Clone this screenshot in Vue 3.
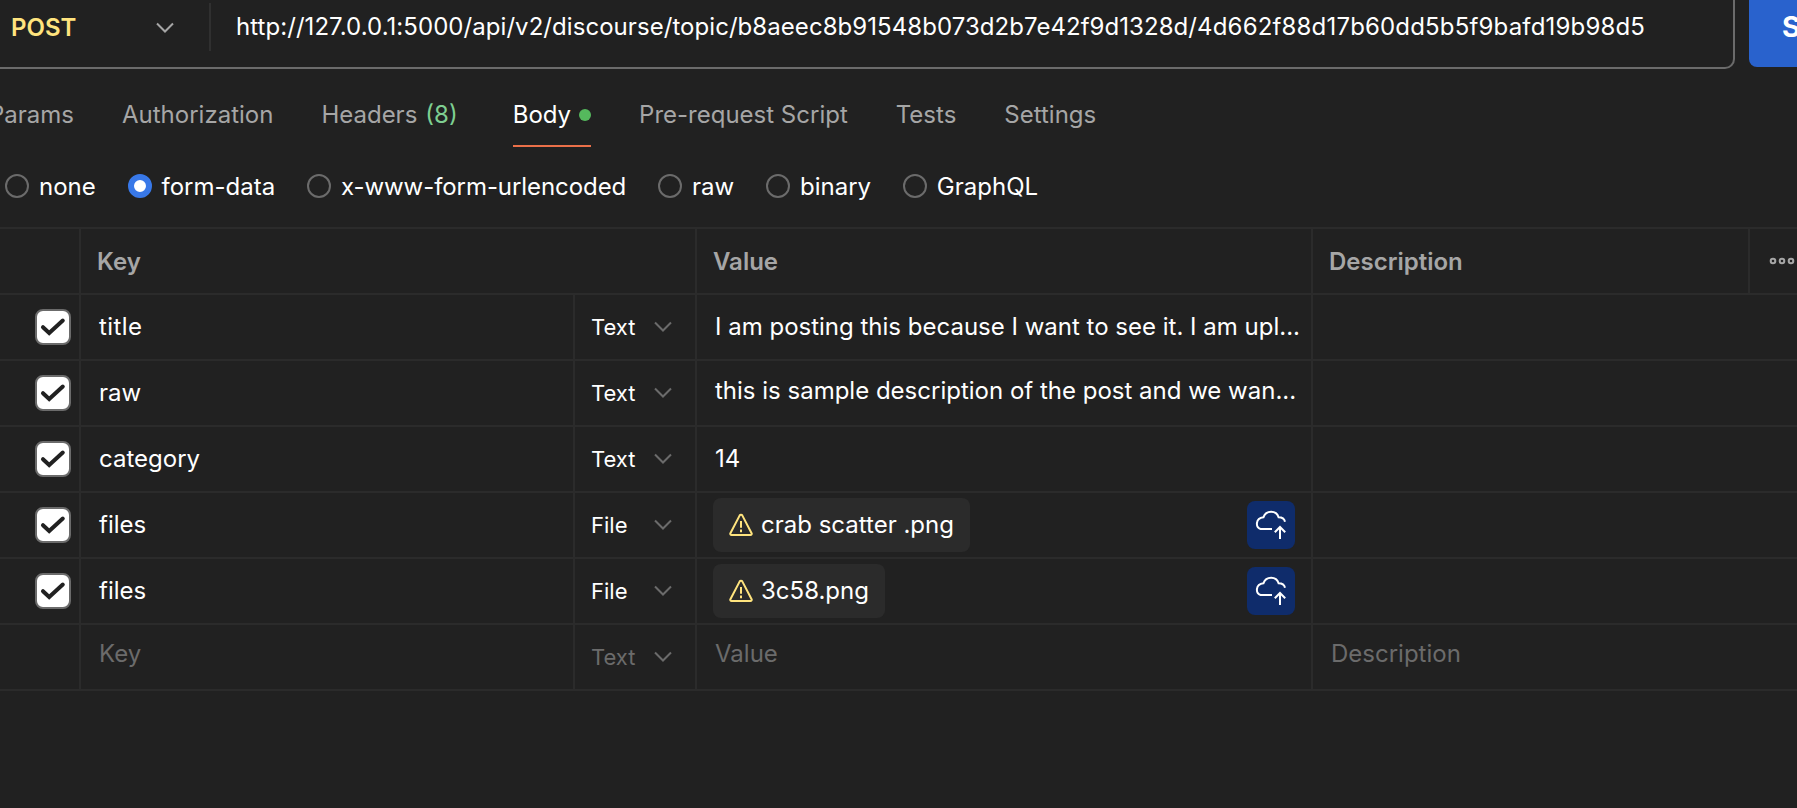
<script setup>
const urlPath = 'http://127.0.0.1:5000/api/v2/discourse/topic/b8aeec8b91548b073d2b7e42f9d1328d/'
const urlId = '4d662f88d17b60dd5b5f9bafd19b98d5'

const tabs = [
  { label: 'Params' },
  { label: 'Authorization' },
  { label: 'Headers', count: '(8)' },
  { label: 'Body', active: true },
  { label: 'Pre-request Script' },
  { label: 'Tests' },
  { label: 'Settings' },
]

const modes = ['none', 'form-data', 'x-www-form-urlencoded', 'raw', 'binary', 'GraphQL']
const mode = 'form-data'

const rows = [
  { key: 'title', type: 'Text', value: 'I am posting this because I want to see it. I am upl...' },
  { key: 'raw', type: 'Text', value: 'this is sample description of the post and we wan...', raised: true },
  { key: 'category', type: 'Text', value: '14' },
  { key: 'files', type: 'File', file: 'crab scatter .png' },
  { key: 'files', type: 'File', file: '3c58.png' },
]
</script>

<template>
  <div class="app">
    <div class="request">
      <div class="field">
        <div class="method">
          <span>POST</span>
          <svg class="chev" width="20" height="12" viewBox="0 0 20 12"><path d="M2 1.5 10 9.5 18 1.5" /></svg>
        </div>
        <div class="url">{{ urlPath }}<span class="url-id">{{ urlId }}</span></div>
      </div>
      <button class="send">Send</button>
    </div>

    <nav class="tabs">
      <div v-for="t in tabs" :key="t.label" class="tab" :class="{ active: t.active }">
        <span>{{ t.label }}</span>
        <span v-if="t.count" class="count">{{ t.count }}</span>
        <i v-if="t.active" class="dot"></i>
      </div>
    </nav>

    <div class="modes">
      <label v-for="m in modes" :key="m" class="mode" :class="{ long: m.length > 12 }">
        <i class="radio" :class="{ on: m === mode }"></i>
        <span>{{ m }}</span>
      </label>
    </div>

    <div class="table">
      <div class="row head">
        <div class="cell"></div>
        <div class="cell keyhead">Key</div>
        <div class="cell">Value</div>
        <div class="cell">Description</div>
        <div class="cell more">
          <svg width="26" height="8" viewBox="0 0 26 8">
            <circle cx="4" cy="4" r="2.3" /><circle cx="13" cy="4" r="2.3" /><circle cx="22" cy="4" r="2.3" />
          </svg>
        </div>
      </div>

      <div v-for="(r, i) in rows" :key="i" class="row">
        <div class="cell check">
          <span class="box">
            <svg width="32" height="32" viewBox="0 0 32 32"><path d="M6 16.200 12.200 22 25.800 9.500" /></svg>
          </span>
        </div>
        <div class="cell" :class="{ spaced: r.key === 'title' }">{{ r.key }}</div>
        <div class="cell type">
          <span>{{ r.type }}</span>
          <svg class="chev" width="20" height="12" viewBox="0 0 20 12"><path d="M2 1.5 10 9.5 18 1.5" /></svg>
        </div>
        <div v-if="r.file" class="cell file">
          <span class="chip">
            <svg class="warn" width="24" height="24" viewBox="0 0 24 24">
              <path d="M10.6 2.6a1.6 1.6 0 0 1 2.8 0l9.2 17.600a1.300 1.300 0 0 1-1.200 1.900H2.600a1.300 1.300 0 0 1-1.200-1.900z" />
              <path d="M12 8v6.700M12 16.500v2.800" />
            </svg>
            <span>{{ r.file }}</span>
          </span>
          <span class="upload">
            <svg width="48" height="48" viewBox="0 0 48 48">
              <path d="M25 28H13.600C8.400 26.400 8.200 17.200 16.400 16.300 19 8.800 29.400 8.800 31.600 16.300 35.200 16.300 37.400 18 38 20.700" />
              <path d="M33 38V26.200M27.800 31.200 33 26 38.200 31.200" />
            </svg>
          </span>
        </div>
        <div v-else class="cell" :class="{ raised: r.raised }"><span>{{ r.value }}</span></div>
        <div class="cell last"></div>
      </div>

      <div class="row blank">
        <div class="cell"></div>
        <div class="cell"><span>Key</span></div>
        <div class="cell type">
          <span>Text</span>
          <svg class="chev" width="20" height="12" viewBox="0 0 20 12"><path d="M2 1.5 10 9.5 18 1.5" /></svg>
        </div>
        <div class="cell"><span>Value</span></div>
        <div class="cell last"><span>Description</span></div>
      </div>
    </div>
  </div>
</template>

<style>
body {
  margin: 0;
  background: #212121;
  overflow: hidden;
}
</style>

<style scoped>
.app {
  width: 1797px;
  height: 808px;
  overflow: hidden;
  background: #212121;
  color: #fff;
  font: 24px/32px Inter, sans-serif;
  white-space: nowrap;
}
svg {
  display: block;
  fill: none;
  flex: none;
}
.chev {
  stroke: #6b6b6b;
  stroke-width: 2;
}
.request {
  display: flex;
  height: 69px;
}
.field {
  box-sizing: border-box;
  width: 1735px;
  flex: none;
  display: flex;
  padding-top: 3px;
  border: solid #6b6b6b;
  border-width: 0 2px 2px 0;
  border-radius: 0 0 10px 0;
}
.method {
  box-sizing: border-box;
  width: 211px;
  height: 48px;
  padding: 1px 34px 0 11px;
  display: flex;
  align-items: center;
  justify-content: space-between;
  border-right: 2px solid #303030;
  color: #ffe47e;
  font-weight: 600;
}
.method .chev {
  stroke: #a6a6a6;
}
.url {
  padding-left: 25px;
  line-height: 47px;
  letter-spacing: 0.055px;
}
.url-id {
  letter-spacing: 0.17px;
}
.send {
  flex: none;
  box-sizing: border-box;
  width: 160px;
  height: 67px;
  margin-left: 14px;
  padding: 0 0 13px 33px;
  border: 0;
  border-radius: 0 0 8px 8px;
  background: #2962cd;
  color: #fff;
  font: 700 28px/54px Inter, sans-serif;
  text-align: left;
}
.tabs {
  display: flex;
  gap: 48px;
  height: 78px;
  margin-left: -11px;
}
.tab {
  box-sizing: border-box;
  display: flex;
  align-items: center;
  height: 78px;
  padding-top: 16px;
  border-bottom: 2px solid transparent;
  color: #a6a6a6;
}
.tab.active {
  color: #fff;
  border-color: #eb7049;
}
.count {
  margin: 0 7px 0 8px;
  color: #7ecf91;
}
.dot {
  width: 12px;
  height: 12px;
  margin-left: 8px;
  border-radius: 50%;
  background: #55b95d;
}
.modes {
  display: flex;
  gap: 31.8px;
  height: 80px;
  padding-left: 5px;
  box-sizing: border-box;
  padding-top: 23px;
}
.mode {
  display: flex;
  height: 32px;
  align-items: center;
}
.mode span {
  padding-top: 2px;
}
.mode.long {
  letter-spacing: -0.07px;
}
.radio {
  box-sizing: border-box;
  width: 24px;
  height: 24px;
  margin-right: 10px;
  border: 2px solid #6b6b6b;
  border-radius: 50%;
}
.radio.on {
  border: 6px solid #3878e8;
  background: #fff;
}
.table {
  border-top: 2px solid #2b2b2b;
}
.row {
  display: grid;
  grid-template-columns: 81px 494px 122px 616px 484px;
  height: 66px;
}
.cell {
  box-sizing: border-box;
  border: solid #2b2b2b;
  border-width: 0 2px 2px 0;
  padding-left: 18px;
  line-height: 64px;
  min-width: 0;
}
.spaced {
  letter-spacing: 0.4px;
}
.last {
  border-right: 0;
}
.head {
  grid-template-columns: 81px 616px 616px 437px 47px;
  color: #a6a6a6;
  font-weight: 600;
}
.head .cell {
  padding-left: 16px;
  line-height: 66px;
  height: 66px;
}
.head .more {
  border-right: 0;
  padding: 28px 0 0 19px;
}
.more svg {
  stroke: #a6a6a6;
  stroke-width: 2;
}
.check {
  padding: 14px 0 0 35px;
}
.box {
  box-sizing: border-box;
  display: block;
  width: 36px;
  height: 36px;
  border: 2px solid #6b6b6b;
  border-radius: 8px;
  background: #fff;
}
.box svg {
  stroke: #212121;
  stroke-width: 4;
  stroke-linecap: round;
}
.type {
  display: flex;
  align-items: center;
  justify-content: space-between;
  padding: 0 22px 0 16px;
  font-size: 22px;
}
.file {
  display: flex;
  align-items: center;
  justify-content: space-between;
  padding: 0 16px;
}
.chip {
  display: flex;
  align-items: center;
  height: 54px;
  padding: 0 16px;
  gap: 8px;
  border-radius: 8px;
  background: #2b2b2b;
  line-height: 54px;
}
.warn {
  stroke: #ffe47e;
  stroke-width: 2;
}
.upload {
  width: 48px;
  height: 48px;
  border-radius: 8px;
  background: #0f2c6b;
}
.upload svg {
  stroke: #fff;
  stroke-width: 2;
}
.raised {
  line-height: 60px;
}
.blank {
  color: #6b6b6b;
}
.blank .cell {
  line-height: 58px;
}
.blank .type {
  line-height: 64px;
}
</style>
